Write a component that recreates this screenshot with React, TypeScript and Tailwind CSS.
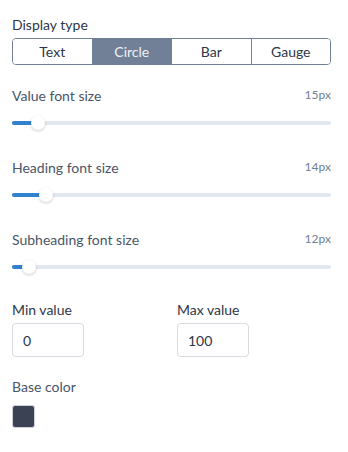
import { useState } from 'react';

const types = ['Text', 'Circle', 'Bar', 'Gauge'];

const sliders = [
  { label: 'Value font size', value: '15px', pos: 26 },
  { label: 'Heading font size', value: '14px', pos: 34 },
  { label: 'Subheading font size', value: '12px', pos: 17 },
];

function Slider({ pos }: { pos: number }) {
  return (
    <div className="relative mt-[10px] h-4">
      <div className="absolute left-0 right-0 top-[6px] h-1 rounded-full bg-[#e2e8f0]" />
      <div
        className="absolute left-0 top-[6px] h-1 rounded-full bg-[#3182ce]"
        style={{ width: pos }}
      />
      <div
        className="absolute top-px h-[14px] w-[14px] -translate-x-1/2 rounded-full bg-white shadow-[0_1px_3px_rgba(0,0,0,0.2)]"
        style={{ left: pos }}
      />
    </div>
  );
}

export default function App() {
  const [active, setActive] = useState('Circle');
  return (
    <div
      className="min-h-screen w-full bg-white pl-3 pr-[17px] pt-[15px] text-[14px] text-[#4a5568]"
      style={{ fontFamily: 'Lato, "Open Sans", sans-serif' }}
    >
      <div className="leading-5 text-[#2d3748]">Display type</div>
      <div className="mt-[3px] flex h-[27px] overflow-hidden rounded border border-[#718096]">
        {types.map((t, i) => (
          <button
            key={t}
            onClick={() => setActive(t)}
            className={`flex flex-1 items-center justify-center leading-5 ${i > 0 ? 'border-l border-[#718096]' : ''} ${active === t ? 'bg-[#718096] text-[#edf2f7]' : 'bg-white text-[#2d3748]'}`}
          >
            {t}
          </button>
        ))}
      </div>

      <div className="mt-[20px] flex flex-col gap-[26px]">
        {sliders.map((s) => (
          <div key={s.label}>
            <div className="flex h-5 items-center justify-between">
              <span>{s.label}</span>
              <span className="text-[12px] text-[#718096]">{s.value}</span>
            </div>
            <Slider pos={s.pos} />
          </div>
        ))}
      </div>

      <div className="mt-[25px] grid grid-cols-2 gap-x-[11px]">
        <div>
          <div className="leading-5 text-[#2d3748]">Min value</div>
          <input
            defaultValue="0"
            className="mt-[3px] h-[34px] w-[72px] rounded border border-[#d8dde4] px-[10px] text-[14px] text-[#2d3748] outline-none"
          />
        </div>
        <div>
          <div className="leading-5 text-[#2d3748]">Max value</div>
          <input
            defaultValue="100"
            className="mt-[3px] h-[34px] w-[72px] rounded border border-[#d8dde4] px-[10px] text-[14px] text-[#2d3748] outline-none"
          />
        </div>
      </div>

      <div className="mt-5 leading-5">Base color</div>
      <div className="mt-2 h-[23px] w-[23px] rounded-[3px] border border-[#cbd2dc] bg-[#3a4254]" />
    </div>
  );
}
